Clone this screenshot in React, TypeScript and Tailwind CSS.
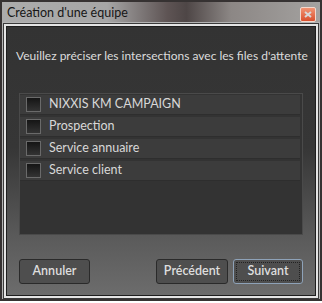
import React, { useState } from 'react';

const queues = ['NIXXIS KM CAMPAIGN', 'Prospection', 'Service annuaire', 'Service client'];

export default function App() {
  const [checked, setChecked] = useState<boolean[]>(queues.map(() => false));

  const toggle = (i: number) => {
    setChecked((prev) => prev.map((v, j) => (j === i ? !v : v)));
  };

  return (
    <div className="w-[322px] h-[303px] bg-white font-['Lato',sans-serif]">
      {/* Window frame */}
      <div className="w-[322px] h-[301px] border-2 border-[#363232] bg-[#2f2f2f] flex flex-col">
        {/* Title bar */}
        <div className="h-[20px] shrink-0 flex items-center justify-between pl-[5px] pr-[4px] bg-[linear-gradient(to_right,#acacac_0%,#a6a6a6_33%,#5e5454_52%,#4e4646_58%,#8c8785_72%,#a4a2a0_100%)]">
          <span className="text-[12.5px] leading-none text-[#161616] pt-[2px] whitespace-nowrap">Création d'une équipe</span>
          <div className="w-[16px] h-[15px] mt-[4px] rounded-[2px] border border-[#f4d8cc] bg-[linear-gradient(to_bottom,#f29474,#d9502e)] flex items-center justify-center">
            <svg width="8" height="7" viewBox="0 0 8 7">
              <path d="M1 1 L7 6 M7 1 L1 6" stroke="#d8d8d8" strokeWidth="2" />
            </svg>
          </div>
        </div>

        {/* Frame lines */}
        <div className="flex-1 border-t border-x border-[#b4b4b4] flex flex-col">
          <div className="flex-1 border border-[#3a3a3a] flex flex-col">
            <div className="flex-1 border-2 border-[#e4e4e4] flex flex-col">
              <div className="flex-1 border border-[#1e1e1e] bg-[linear-gradient(to_bottom,#333333_0%,#363636_45%,#5c5c5c_80%,#6c6c6c_100%)] flex flex-col">
                {/* Body */}
                <p className="mt-[21px] pl-[9px] text-[12px] leading-[16px] text-[#dcdcdc] whitespace-nowrap">
                  Veuillez préciser les intersections avec les files d'attente
                </p>

                <div className="mt-[29px] mx-[12px] h-[142px] border border-[#4a4a4a] bg-[#333333] flex flex-col gap-[2px] pt-[1px] pr-[2px]">
                  {queues.map((q, i) => (
                    <div
                      key={q}
                      onClick={() => toggle(i)}
                      className="h-[20px] flex items-center bg-[#3c3c3c] border-b border-[#2e2e2e] pl-[6px]"
                    >
                      <div className="w-[15px] h-[15px] border border-[#6a6a6a] bg-[linear-gradient(to_bottom,#151515,#333333)] flex items-center justify-center">
                        {checked[i] && <span className="text-[10px] leading-none text-[#ddd]">✓</span>}
                      </div>
                      <span className="ml-[8px] text-[12.5px] leading-none text-[#d8d8d8]">{q}</span>
                    </div>
                  ))}
                </div>

                {/* Buttons */}
                <div className="mt-[24px] mx-[12px] flex items-center">
                  <button className="w-[71px] h-[25px] rounded-[3px] border border-[#2a2a2a] bg-[#4e4e4e] text-[12.5px] font-semibold text-[#dedede]">
                    Annuler
                  </button>
                  <div className="flex-1" />
                  <button className="w-[72px] h-[25px] rounded-[3px] border border-[#2a2a2a] bg-[#4e4e4e] text-[12.5px] font-semibold text-[#dedede]">
                    Précédent
                  </button>
                  <button className="ml-[5px] w-[70px] h-[25px] rounded-[3px] border border-[#8ea2b8] bg-[#4e4e4e] p-[2px] text-[12.5px] font-semibold text-[#dedede]">
                    <div className="w-full h-full border border-dotted border-[#222] flex items-center justify-center">
                      Suivant
                    </div>
                  </button>
                </div>
              </div>
            </div>
          </div>
        </div>
      </div>
    </div>
  );
}
